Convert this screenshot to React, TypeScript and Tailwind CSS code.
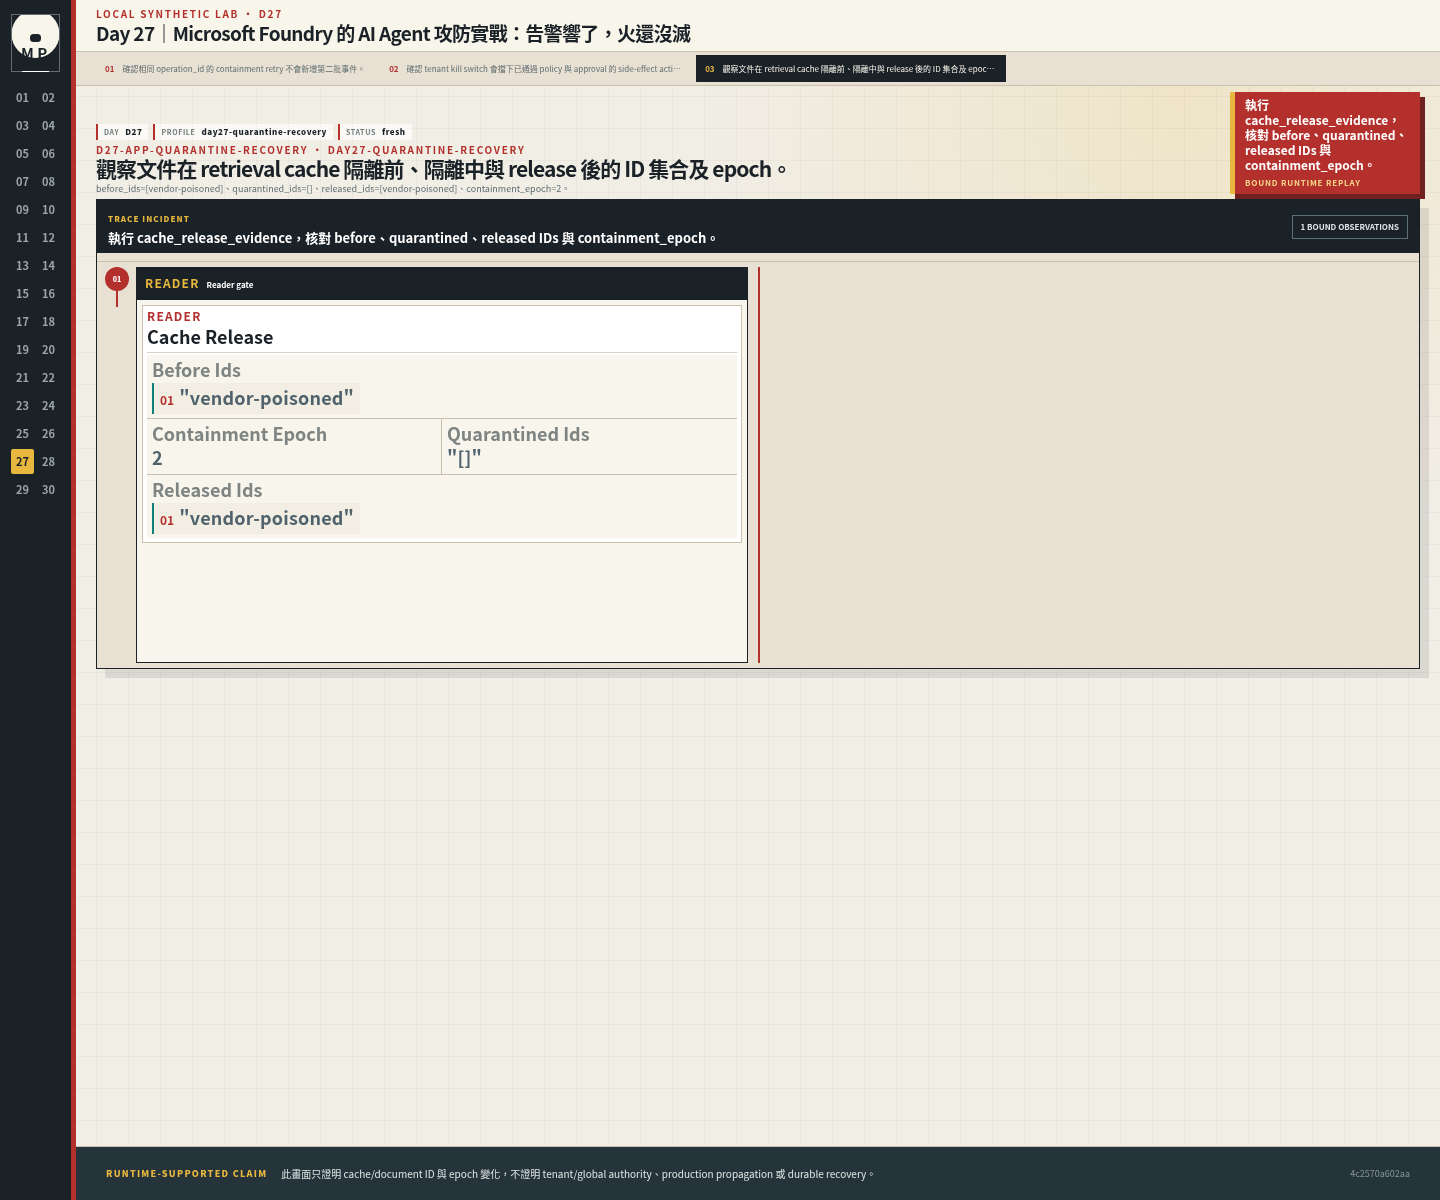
/**
 * Runtime replay console: day rail, scenario tabs, trace incident board
 * and the claim footer.
 */

const DAYS = Array.from({ length: 30 }, (_, i) => String(i + 1).padStart(2, "0"));
const ACTIVE_DAY = "27";

const SCENARIOS = [
  { id: "01", title: "確認相同 operation_id 的 containment retry 不會新增第二批事件。" },
  { id: "02", title: "確認 tenant kill switch 會擋下已通過 policy 與 approval 的 side-effect action。" },
  { id: "03", title: "觀察文件在 retrieval cache 隔離前、隔離中與 release 後的 ID 集合及 epoch。" },
];
const ACTIVE_SCENARIO = "03";

const META = [
  { label: "DAY", value: "D27" },
  { label: "PROFILE", value: "day27-quarantine-recovery" },
  { label: "STATUS", value: "fresh" },
];

const ACTION = "執行 cache_release_evidence，核對 before、quarantined、released IDs 與 containment_epoch。";

interface Field {
  label: string;
  value?: string;
  items?: string[];
}

const FIELDS: Field[] = [
  { label: "Before Ids", items: ['"vendor-poisoned"'] },
  { label: "Containment Epoch", value: "2" },
  { label: "Quarantined Ids", value: '"[]"' },
  { label: "Released Ids", items: ['"vendor-poisoned"'] },
];

function Logo() {
  return (
    <svg width="49" height="58" viewBox="0 0 49 58" role="img" aria-label="MP">
      <circle cx="24.5" cy="20" r="24" fill="#f8f5ea" />
      <rect x="19" y="20" width="11" height="8" rx="3.5" fill="#1a2127" />
      <text x="10" y="45" fontSize="15" fontWeight="700" fill="#1a2127">
        M P
      </text>
      <rect x="0.5" y="0.5" width="48" height="57" fill="none" stroke="#626b6f" />
      <path d="M11 57.5h27" stroke="#ffffff" />
    </svg>
  );
}

function DayRail() {
  return (
    <aside className="flex w-[76px] shrink-0 flex-col border-r-[5px] border-[#b3302d] bg-[#1a2127] px-[11px] pt-[14px]">
      <Logo />
      <nav aria-label="Days" className="mt-[13px] grid grid-cols-2 gap-[3px]">
        {DAYS.map((day) => (
          <a
            key={day}
            href={`#day-${day}`}
            className={`flex h-[25px] items-center justify-center rounded-[2px] text-[11px] font-bold ${
              day === ACTIVE_DAY ? "bg-[#e7b73e] text-[#1a2127]" : "text-[#9ba5a8]"
            }`}
          >
            {day}
          </a>
        ))}
      </nav>
    </aside>
  );
}

function ScenarioTabs() {
  return (
    <nav
      aria-label="Scenarios"
      className="flex h-[34px] items-start gap-[6px] border-b border-[#c9c0ae] bg-[#e8e0d2] px-5 pt-[3px]"
    >
      {SCENARIOS.map((s) => {
        const active = s.id === ACTIVE_SCENARIO;
        return (
          <button
            key={s.id}
            type="button"
            className={`flex h-[27px] max-w-[310px] items-center gap-2 px-[9px] text-left ${
              active ? "bg-[#1a2127] text-[#f8f5ea]" : "text-[#5f6d70]"
            }`}
          >
            <b className={`text-[8px] font-bold ${active ? "text-[#e7b73e]" : "text-[#b3302d]"}`}>{s.id}</b>
            <span className="truncate text-[8px]">{s.title}</span>
          </button>
        );
      })}
    </nav>
  );
}

function FieldCell({ field }: { field: Field }) {
  if (field.items) {
    return (
      <div className="col-span-2 border-b border-[#c9c0ae] bg-[#f8f5ec] px-[5px] pt-[2px] pb-1 last:border-b-0">
        <dt className="mb-[2px] text-[18px] leading-6 font-bold text-[#7d8482]">{field.label}</dt>
        {field.items.map((item, idx) => (
          <dd
            key={item}
            className="flex h-[31px] w-52 items-baseline gap-[5px] border-l-2 border-[#0f8079] bg-[#f3eee4] pl-[6px] whitespace-nowrap"
          >
            <span className="text-[12px] font-bold text-[#b3302d]">
              {String(idx + 1).padStart(2, "0")}
            </span>
            <span className="text-[18px] leading-7 font-bold tracking-[0.01em] text-[#50636d]">{item}</span>
          </dd>
        ))}
      </div>
    );
  }
  return (
    <div className="border-r border-b border-[#c9c0ae] bg-[#f8f5ec] px-[5px] pt-[2px] pb-[5px] nth-3:border-r-0">
      <dt className="text-[18px] leading-6 font-bold text-[#7d8482]">{field.label}</dt>
      <dd className="text-[18px] leading-6 font-bold tracking-[0.01em] text-[#50636d]">{field.value}</dd>
    </div>
  );
}

function ReaderCard() {
  return (
    <article className="flex min-h-[396px] flex-1 flex-col border border-[#1a2127] bg-[#f8f5ec]">
      <header className="flex h-8 items-baseline gap-[7px] bg-[#1a2127] px-2 leading-[30px]">
        <b className="text-[12px] font-bold tracking-[0.1em] text-[#e7b73e]">READER</b>
        <span className="text-[8px] font-bold text-white">Reader gate</span>
      </header>
      <section className="m-[5px] border border-[#c9c0ae] bg-white p-1">
        <p className="text-[12px] leading-3 font-bold tracking-[0.1em] text-[#b3302d]">READER</p>
        <h3 className="border-b border-[#d8d1c3] pb-[2px] text-[18px] leading-7 font-bold text-[#1a2127]">
          Cache Release
        </h3>
        <dl className="mt-[2px] grid grid-cols-2">
          {FIELDS.map((field) => (
            <FieldCell key={field.label} field={field} />
          ))}
        </dl>
      </section>
    </article>
  );
}

function TraceBoard() {
  return (
    <section className="border border-[#1a2127] bg-[#e8e0d2] shadow-[9px_9px_0_rgba(26,33,39,0.1)]">
      <header className="flex h-[53px] items-center justify-between bg-[#1a2127] px-[11px]">
        <div className="pt-2">
          <p className="text-[8px] leading-3 font-black tracking-[0.13em] text-[#e7b73e]">TRACE INCIDENT</p>
          <h2 className="mt-[3px] text-[13px] leading-5 font-bold text-white">{ACTION}</h2>
        </div>
        <span className="flex h-6 items-center border border-[#5e7077] px-2 text-[8px] font-bold text-[#dfe5e4]">
          1 BOUND OBSERVATIONS
        </span>
      </header>
      <div className="h-[9px] border-b border-[#c9c0ae]" />
      <ol className="grid grid-cols-2 px-2 py-[5px]">
        <li className="flex gap-[7px] pr-[10px]">
          <div className="flex w-6 flex-col items-center">
            <span className="flex size-6 items-center justify-center rounded-full bg-[#b3302d] text-[7px] font-black text-white">
              01
            </span>
            <span className="h-4 w-[2px] bg-[#b3302d]" />
          </div>
          <ReaderCard />
        </li>
        <li className="border-l-2 border-[#b3302d]" />
      </ol>
    </section>
  );
}

export default function App() {
  return (
    <div
      lang="zh-Hant"
      className="flex min-h-screen bg-[#f1eee6] bg-[linear-gradient(rgba(26,33,39,0.04)_1px,transparent_1px),linear-gradient(90deg,rgba(26,33,39,0.04)_1px,transparent_1px),radial-gradient(circle_at_82%_8%,rgba(231,183,62,0.18),transparent_30%)] bg-[size:32px_32px,32px_32px,auto] font-['Noto_Sans_CJK_TC',sans-serif] text-[#1a2127] will-change-transform"
    >
      <DayRail />
      <div className="flex min-w-0 flex-1 flex-col">
        <header className="h-[52px] border-b border-[#c9c0ae] bg-[#f8f5ea] px-5 pt-[7px]">
          <p className="text-[10px] leading-[14px] font-bold tracking-[0.17em] text-[#b3302d]">
            LOCAL SYNTHETIC LAB • D27
          </p>
          <h1 className="text-[19px] leading-6 font-bold tracking-[-0.035em]">
            Day 27｜Microsoft Foundry 的 AI Agent 攻防實戰：告警響了，火還沒滅
          </h1>
        </header>
        <ScenarioTabs />
        <main className="flex-1 px-5 pt-[6px] pb-6">
          <div className="mb-[5px] flex items-end justify-between gap-6">
            <div>
              <dl className="flex gap-[5px]">
                {META.map((m) => (
                  <div
                    key={m.label}
                    className="flex h-4 items-center gap-[6px] border-l-2 border-[#b3302d] bg-white/65 px-[6px]"
                  >
                    <dt className="text-[7px] font-bold tracking-[0.09em] text-[#6f7a7a]">{m.label}</dt>
                    <dd className="text-[8px] font-black tracking-[0.07em]">{m.value}</dd>
                  </div>
                ))}
              </dl>
              <p className="mt-[3px] text-[10px] leading-[14px] font-bold tracking-[0.17em] text-[#b3302d]">
                D27-APP-QUARANTINE-RECOVERY • DAY27-QUARANTINE-RECOVERY
              </p>
              <h2 className="text-[21px] leading-[22px] font-bold tracking-[-0.043em]">
                觀察文件在 retrieval cache 隔離前、隔離中與 release 後的 ID 集合及 epoch。
              </h2>
              <p className="mt-1 text-[9px] leading-[11px] text-[#5f6d70]">
                before_ids=[vendor-poisoned]、quarantined_ids=[]、released_ids=[vendor-poisoned]、containment_epoch=2。
              </p>
            </div>
            <aside className="w-[190px] shrink-0 border-l-[5px] border-[#e7b73e] bg-[#b3302d] px-[10px] py-[5px] shadow-[5px_5px_0_#70211f]">
              <p className="text-[12px] leading-[15px] font-bold text-white">{ACTION}</p>
              <p className="mt-[5px] text-[8px] leading-3 font-bold tracking-[0.1em] text-[#f8d789]">
                BOUND RUNTIME REPLAY
              </p>
            </aside>
          </div>
          <TraceBoard />
        </main>
        <footer className="flex h-[54px] items-center border-t border-[#c9c0ae] bg-[#25343b] px-[30px]">
          <b className="text-[9px] font-black tracking-[0.14em] text-[#e7b73e]">RUNTIME-SUPPORTED CLAIM</b>
          <p className="ml-[14px] text-[10px] text-[#dfe5e4]">
            此畫面只證明 cache/document ID 與 epoch 變化，不證明 tenant/global authority、production propagation 或
            durable recovery。
          </p>
          <code className="ml-auto font-['Noto_Sans_CJK_TC',sans-serif] text-[9px] text-[#87959a]">4c2570a602aa</code>
        </footer>
      </div>
    </div>
  );
}
